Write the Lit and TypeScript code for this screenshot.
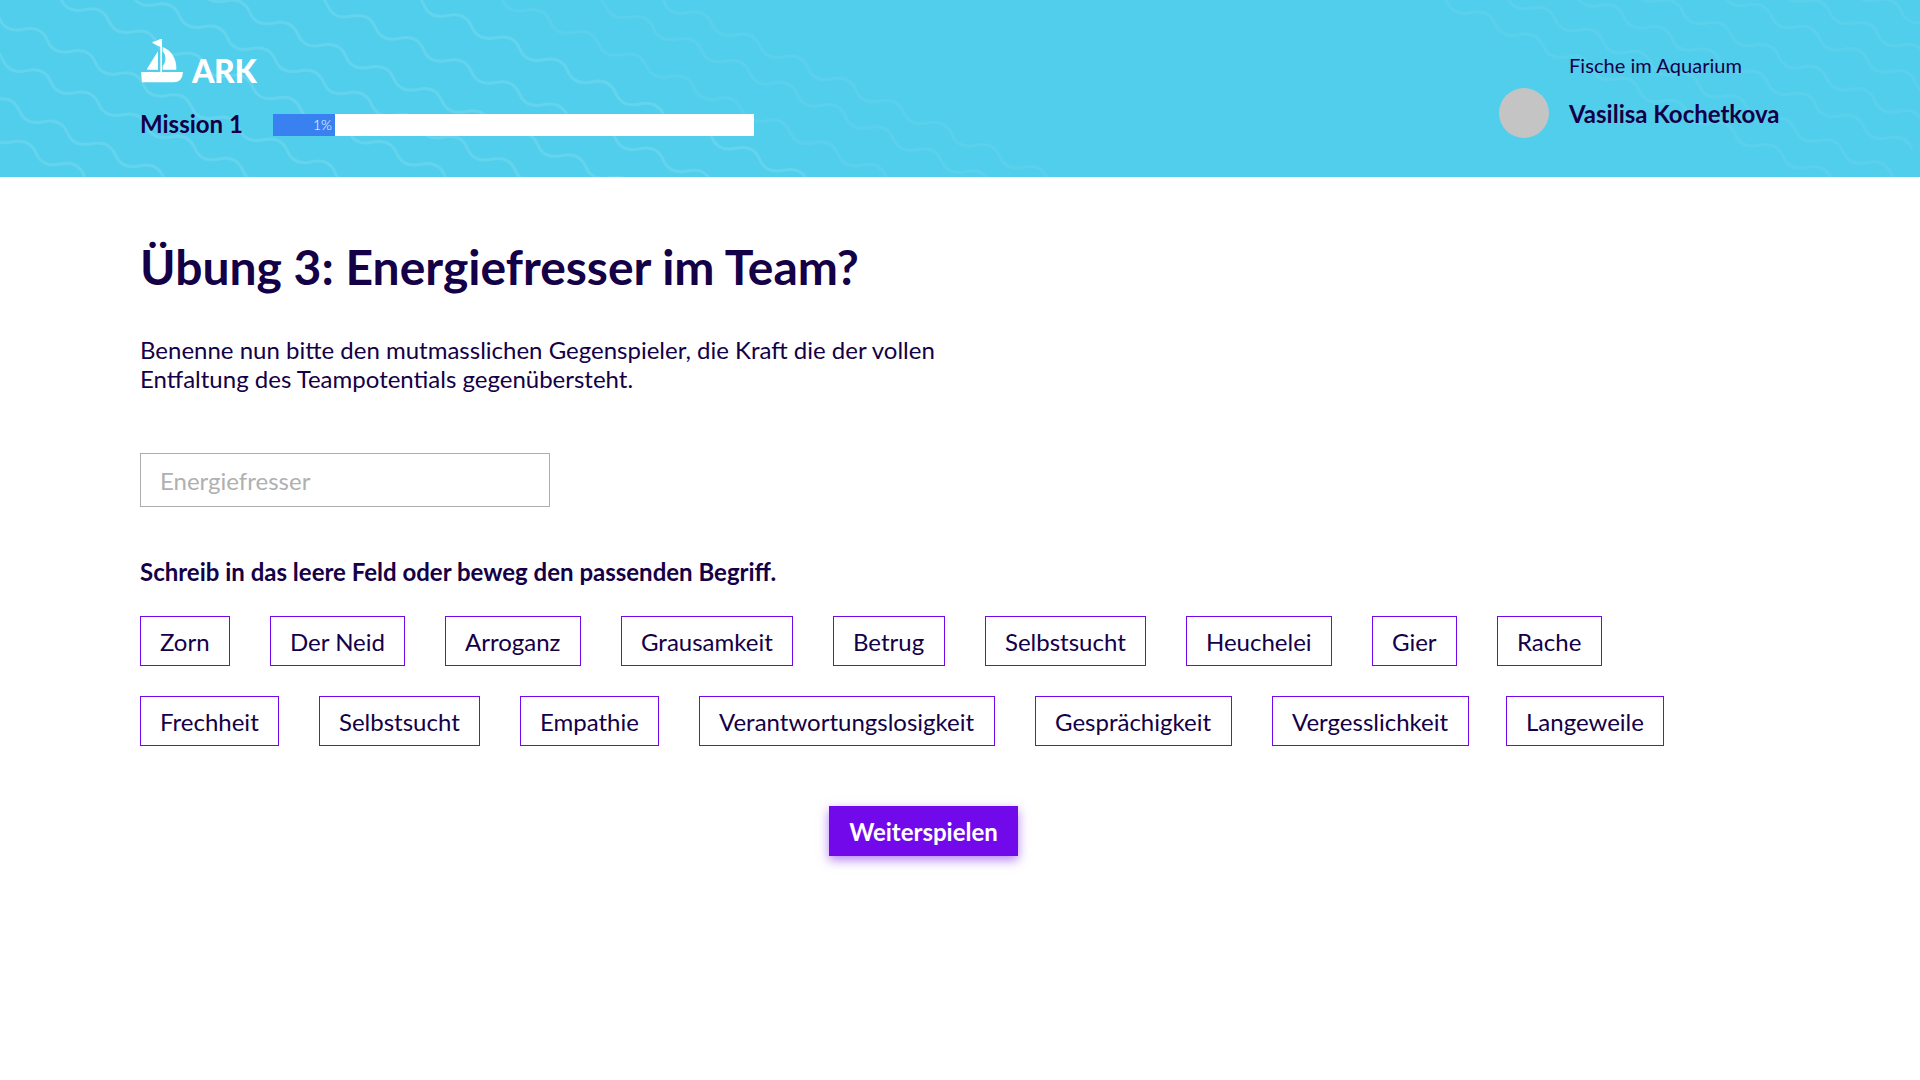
import { LitElement, html, css, svg } from "lit";
import { customElement, property } from "lit/decorators.js";

// One wave period: steep section, flat section, steep section.
const PERIOD = "c4.67 11.33 14 13.2 24 11.05s19.3-.25 24 11.05";

interface Wave {
  x: number;
  y: number;
  before: number;
  after: number;
}

const wave = (x: number, y: number, after = 14, before = 4): Wave => ({ x: x / 3, y: y / 3, before, after });

const STRONG: Wave[] = [
  wave(108, 459), wave(58, 332), wave(152, 245), wave(142, 121), wave(326, 62),
  wave(538, 47), wave(749, 36), wave(1126, 82), wave(1415, 80),
];
const SOFT: Wave[] = [
  wave(1650, 64, 7), wave(1960, 84), wave(2135, 71),
  wave(4485, 71), wave(4665, 57), wave(4871, 49, 6), wave(5192, 102),
  wave(5314, 48), wave(5489, 36), wave(5703, 33),
];

const wavePath = (w: Wave) =>
  `M${(w.x - 48 * w.before).toFixed(2)} ${(w.y - 22.1 * w.before).toFixed(2)}` + PERIOD.repeat(w.before + w.after);

@customElement("ark-waves")
class ArkWaves extends LitElement {
  static styles = css`
    :host { display: block; }
    svg { display: block; width: 1920px; height: 177px; }
    path { fill: none; stroke: #fff; stroke-width: 3; stroke-linecap: round; }
    .strong { stroke-opacity: 0.11; }
    .soft { stroke-opacity: 0.06; }
  `;
  render() {
    return html`<svg viewBox="0 0 1920 177" aria-hidden="true">
      ${STRONG.map((w) => svg`<path class="strong" d=${wavePath(w)}></path>`)}
      ${SOFT.map((w) => svg`<path class="soft" d=${wavePath(w)}></path>`)}
    </svg>`;
  }
}

@customElement("ark-progress")
class ArkProgress extends LitElement {
  @property({ type: Number }) fill = 0;
  @property() label = "";
  static styles = css`
    :host { display: block; width: 481px; height: 22px; background: #fff; }
    .bar {
      box-sizing: border-box; height: 22px; padding-right: 3px;
      background: #3980f0; color: #fff; text-align: right;
      font-size: 14px; line-height: 22px; font-weight: 300;
    }
  `;
  render() {
    return html`<div class="bar" style="width:${this.fill}px">${this.label}</div>`;
  }
}

@customElement("ark-header")
class ArkHeader extends LitElement {
  static styles = css`
    :host { display: block; }
    .header {
      position: relative; height: 177px; overflow: hidden; box-sizing: border-box;
      background: #51ceec; padding: 39px 140px 0;
      display: flex; justify-content: space-between; align-items: flex-start;
    }
    ark-waves { position: absolute; left: 0; top: 0; }
    .left, .user { position: relative; }
    .logo { display: flex; height: 44px; }
    .boat { width: 44px; height: 44px; fill: #fff; }
    .brand {
      margin-left: 8px; padding-top: 13px; color: #fff;
      font-size: 32px; line-height: 38px; font-weight: 900; letter-spacing: -0.4px;
    }
    .mission { display: flex; align-items: center; margin-top: 27px; height: 29px; }
    .name { width: 133px; padding-bottom: 2px; font-size: 24px; line-height: 29px; font-weight: 700; }
    .user { display: flex; width: 281px; padding-top: 49px; box-sizing: border-box; }
    .avatar { width: 50px; height: 50px; border-radius: 50%; background: #c4c4c4; }
    .who { margin: -35px 0 0 20px; white-space: nowrap; }
    .team { font-size: 20px; line-height: 24px; letter-spacing: 0.05px; }
    .person { margin-top: 22px; font-size: 24px; line-height: 29px; font-weight: 700; }
  `;
  render() {
    return html`<header class="header">
      <ark-waves></ark-waves>
      <div class="left">
        <div class="logo">
          <svg class="boat" viewBox="0 0 132 132">
            <path d="M3 99H129Q127 130 100 130H6Z"></path>
            <path d="M61 100V23Q49 20 38 12L37 9Q50 6 61 0H66V100Z"></path>
            <path d="M54 37V92H23Q20 92 22 88Z"></path>
            <path d="M68 24C93 33 110 60 109 89Q109 92 106 92H68V82C79 70 79 48 68 37Z"></path>
          </svg>
          <div class="brand">ARK</div>
        </div>
        <div class="mission">
          <div class="name">Mission 1</div>
          <ark-progress fill="62" label="1%"></ark-progress>
        </div>
      </div>
      <div class="user">
        <div class="avatar"></div>
        <div class="who">
          <div class="team">Fische im Aquarium</div>
          <div class="person">Vasilisa Kochetkova</div>
        </div>
      </div>
    </header>`;
  }
}

interface Term {
  word: string;
  width: number;
}

const term = (word: string, width: number): Term => ({ word, width });

const ROWS: Term[][] = [
  [
    term("Zorn", 90), term("Der Neid", 135), term("Arroganz", 136), term("Grausamkeit", 172), term("Betrug", 112),
    term("Selbstsucht", 161), term("Heuchelei", 146), term("Gier", 85), term("Rache", 105),
  ],
  [
    term("Frechheit", 139), term("Selbstsucht", 161), term("Empathie", 139), term("Verantwortungslosigkeit", 296),
    term("Gesprächigkeit", 197), term("Vergesslichkeit", 197), term("Langeweile", 158),
  ],
];

@customElement("app-root")
class AppRoot extends LitElement {
  static styles = css`
    :host {
      display: block; height: 1080px; background: #fff; color: #140047;
      font-family: Lato, "Liberation Sans", sans-serif; font-size: 24px; line-height: 29px;
    }
    main { padding: 61px 140px 0; }
    h1 { margin: 0; font-size: 48px; line-height: 58px; font-weight: 700; }
    p { margin: 39px 0 0; width: 820px; }
    .field {
      display: block; box-sizing: border-box; width: 410px; height: 54px; margin: 60px 0 0;
      border: 1px solid #adadad; border-radius: 0; padding: 1px 19px 0; outline: 0;
      font: inherit; color: inherit; background: #fff;
    }
    .field::placeholder { color: #b0b0b0; opacity: 1; }
    h2 { margin: 50px 0 0; font-size: 24px; line-height: 29px; font-weight: 700; }
    .row { display: flex; gap: 40px; margin-top: 30px; }
    .chip {
      box-sizing: border-box; height: 50px; padding: 10px 0 0 19px;
      border: 1px solid #7209eb; white-space: nowrap;
    }
    .row.second .chip:last-child { margin-left: -3px; }
    .next {
      display: block; width: 189px; height: 50px; margin: 60px 0 0 689px; padding: 0;
      border: 0; background: #7209eb; color: #fff; font: inherit; font-weight: 700;
      box-shadow: 0 4px 10px rgba(114, 9, 235, 0.5);
    }
  `;
  render() {
    return html`
      <ark-header></ark-header>
      <main>
        <h1>Übung 3: Energiefresser im Team?</h1>
        <p>Benenne nun bitte den mutmasslichen Gegenspieler, die Kraft die der vollen<br />Entfaltung des Teampotentials gegenübersteht.</p>
        <input class="field" placeholder="Energiefresser" />
        <h2>Schreib in das leere Feld oder beweg den passenden Begriff.</h2>
        ${ROWS.map((row, i) => html`<div class="row ${i === 0 ? "first" : "second"}">
          ${row.map((t) => html`<div class="chip" style="width:${t.width}px">${t.word}</div>`)}
        </div>`)}
        <button class="next">Weiterspielen</button>
      </main>
    `;
  }
}
